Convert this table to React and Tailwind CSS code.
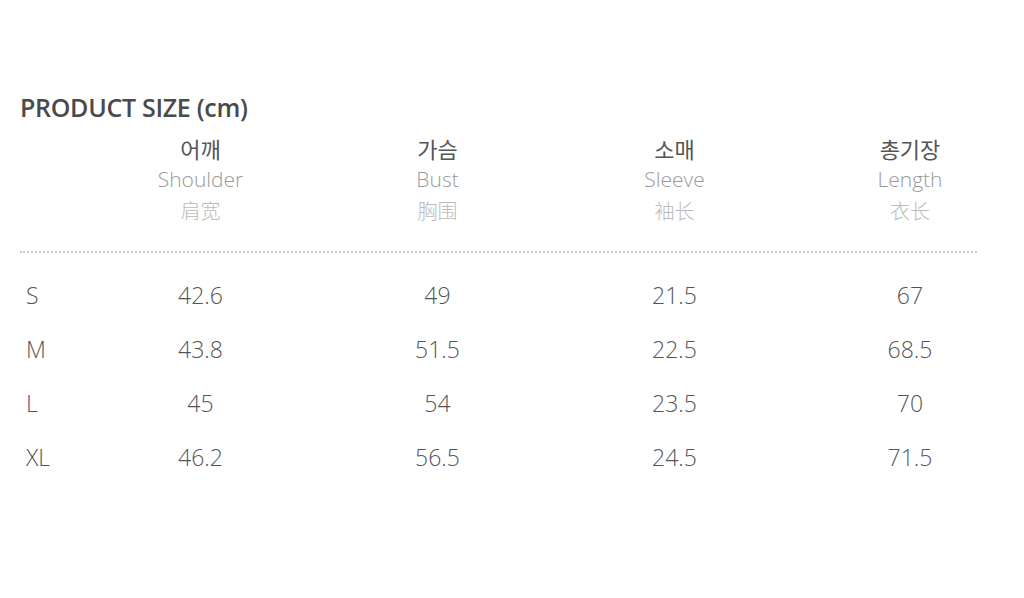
const HEADERS = [
  { ko: '어깨', en: 'Shoulder', zh: '肩宽' },
  { ko: '가슴', en: 'Bust', zh: '胸围' },
  { ko: '소매', en: 'Sleeve', zh: '袖长' },
  { ko: '총기장', en: 'Length', zh: '衣长' },
]

const ROWS = [
  { size: 'S', values: ['42.6', '49', '21.5', '67'] },
  { size: 'M', values: ['43.8', '51.5', '22.5', '68.5'] },
  { size: 'L', values: ['45', '54', '23.5', '70'] },
  { size: 'XL', values: ['46.2', '56.5', '24.5', '71.5'] },
]

const font = { fontFamily: '"Open Sans", "Noto Sans CJK KR", sans-serif' }

export default function App() {
  return (
    <div className="w-[1024px] h-[598px] bg-white overflow-hidden" style={font}>
      <div className="pt-[89px] pl-[20px]">
        <h1 className="text-[25px] leading-[36px] font-semibold text-[#4a4a4a] tracking-[-0.3px]">
          PRODUCT SIZE (cm)
        </h1>

        {/* 헤더 */}
        <div className="mt-[8px] grid grid-cols-[62px_237px_237px_237px_234px]">
          <div />
          {HEADERS.map(h => (
            <div key={h.en} className="flex flex-col items-center">
              <span className="text-[22px] leading-[31px] font-normal text-[#555]" style={{ fontFamily: '"Noto Sans CJK KR", sans-serif' }}>{h.ko}</span>
              <span className="text-[21px] leading-[31px] font-light text-[#9a9a9a]">{h.en}</span>
              <span className="text-[20px] leading-[31px] font-light text-[#bbb]" style={{ fontFamily: '"Noto Sans CJK SC", sans-serif' }}>{h.zh}</span>
            </div>
          ))}
        </div>

        <div className="mt-[25px] w-[957px] border-t-2 border-dotted border-[#ccc]" />

        {/* 사이즈 */}
        <div className="mt-[15px] flex flex-col">
          {ROWS.map(r => (
            <div key={r.size} className="grid grid-cols-[62px_237px_237px_237px_234px] h-[54px] items-center">
              <span className="pl-[6px] text-[23px] font-light text-[#555]">{r.size}</span>
              {r.values.map((v, i) => (
                <span key={i} className="text-center text-[23px] font-light text-[#555]">{v}</span>
              ))}
            </div>
          ))}
        </div>
      </div>
    </div>
  )
}
